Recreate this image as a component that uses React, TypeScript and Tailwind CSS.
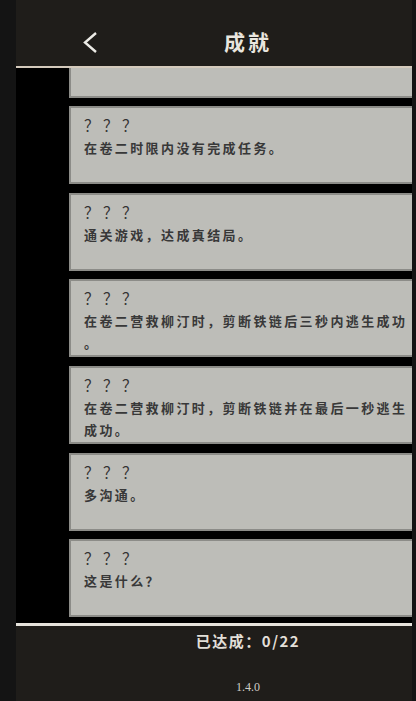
import React from "react";

const achievements = [
  { title: "？？？", desc: "" },
  { title: "？？？", desc: "在卷二时限内没有完成任务。" },
  { title: "？？？", desc: "通关游戏，达成真结局。" },
  { title: "？？？", desc: "在卷二营救柳汀时，剪断铁链后三秒内逃生成功。" },
  { title: "？？？", desc: "在卷二营救柳汀时，剪断铁链并在最后一秒逃生成功。" },
  { title: "？？？", desc: "多沟通。" },
  { title: "？？？", desc: "这是什么？" },
];

const cjk = { fontFamily: '"Noto Sans CJK SC", "Noto Sans", sans-serif' };

const AchievementCard = ({ title, desc }: { title: string; desc: string }) => (
  <div className="h-[78px] w-[362px] shrink-0 border-2 border-[#8c8c88] bg-[#bdbdb8] pl-[13px] pr-[14px] pt-[5px]">
    <div className="text-[15px] leading-[24px] tracking-[4px] text-[#333333]" style={cjk}>
      {title}
    </div>
    <div
      className="text-[13px] font-bold leading-[22px] tracking-[2.4px] text-[#383838] [line-break:anywhere]"
      style={cjk}
    >
      {desc}
    </div>
  </div>
);

export default function App() {
  return (
    <div className="flex h-[701px] w-[416px] overflow-hidden bg-[#141414]">
      <div className="w-[16px] shrink-0" />
      <div className="h-full w-[396px] shrink-0 overflow-hidden">
        <div className="flex h-full w-[464px] flex-col">
          <div className="relative flex h-[66px] shrink-0 items-center justify-center bg-[#1f1d1a]">
            <svg className="absolute left-[65px] top-[31px]" width="18" height="23" viewBox="0 0 18 23">
              <path d="M15 2 L4 11.5 L15 21" fill="none" stroke="#ecebe6" strokeWidth="2.4" />
            </svg>
            <span className="pt-[18px] text-[21px] font-bold tracking-[3px] text-[#e9e6df]" style={cjk}>
              成就
            </span>
          </div>
          <div className="h-[2px] shrink-0 bg-[#d4cabc]" />
          <div className="flex-1 overflow-hidden bg-black pl-[53px]">
            <div className="mt-[-48.3px] flex flex-col gap-[8.6px]">
              {achievements.map((a, i) => (
                <AchievementCard key={i} title={a.title} desc={a.desc} />
              ))}
            </div>
          </div>
          <div className="h-[3px] shrink-0 bg-[#e6e3dc]" />
          <div className="flex h-[75px] shrink-0 flex-col items-center bg-[#1f1d1a]">
            <div className="mt-[4px] text-[15px] font-bold leading-[22px] tracking-[1.5px] text-[#e2dfd8]" style={cjk}>
              已达成：0/22
            </div>
            <div
              className="mt-[27px] text-[12px] leading-[16px] text-[#d0cdc6]"
              style={{ fontFamily: '"Liberation Serif", serif' }}
            >
              1.4.0
            </div>
          </div>
        </div>
      </div>
      <div className="w-[4px] shrink-0" />
    </div>
  );
}
